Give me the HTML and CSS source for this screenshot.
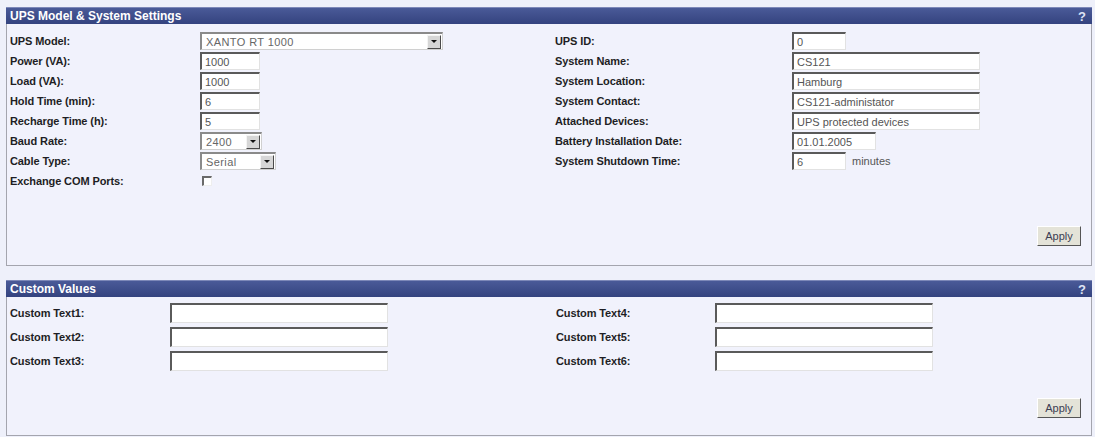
FILE: index.html
```html
<!DOCTYPE html>
<html lang="en">
<head>
    <meta charset="UTF-8">
    <title>UPS Settings</title>
    <link rel="stylesheet" href="styles.css">
</head>
<body>
    <div class="panel">
        <div class="panel-head">
            <span>UPS Model &amp; System Settings</span>
            <span class="help">?</span>
        </div>
        <div class="panel-body">
            <div class="fields system">
                <label>UPS Model:</label>
                <div class="select w-model"><span>XANTO RT 1000</span><i class="arrow"></i></div>
                <label>UPS ID:</label>
                <div><input class="w-id" type="text" value="0"></div>

                <label>Power (VA):</label>
                <div><input class="w-short" type="text" value="1000"></div>
                <label>System Name:</label>
                <div><input class="w-long" type="text" value="CS121"></div>

                <label>Load (VA):</label>
                <div><input class="w-short" type="text" value="1000"></div>
                <label>System Location:</label>
                <div><input class="w-long" type="text" value="Hamburg"></div>

                <label>Hold Time (min):</label>
                <div><input class="w-short" type="text" value="6"></div>
                <label>System Contact:</label>
                <div><input class="w-long" type="text" value="CS121-administator"></div>

                <label>Recharge Time (h):</label>
                <div><input class="w-short" type="text" value="5"></div>
                <label>Attached Devices:</label>
                <div><input class="w-long" type="text" value="UPS protected devices"></div>

                <label>Baud Rate:</label>
                <div class="select w-baud"><span>2400</span><i class="arrow"></i></div>
                <label>Battery Installation Date:</label>
                <div><input class="w-date" type="text" value="01.01.2005"></div>

                <label>Cable Type:</label>
                <div class="select w-cable"><span>Serial</span><i class="arrow"></i></div>
                <label>System Shutdown Time:</label>
                <div><input class="w-id" type="text" value="6"><span class="unit">minutes</span></div>

                <label>Exchange COM Ports:</label>
                <div><span class="check"></span></div>
                <span></span>
                <span></span>
            </div>
            <div class="actions"><button>Apply</button></div>
        </div>
    </div>

    <div class="panel">
        <div class="panel-head">
            <span>Custom Values</span>
            <span class="help">?</span>
        </div>
        <div class="panel-body custom-body">
            <div class="fields custom">
                <label>Custom Text1:</label>
                <div><input class="w-custom" type="text"></div>
                <label>Custom Text4:</label>
                <div><input class="w-custom" type="text"></div>

                <label>Custom Text2:</label>
                <div><input class="w-custom" type="text"></div>
                <label>Custom Text5:</label>
                <div><input class="w-custom" type="text"></div>

                <label>Custom Text3:</label>
                <div><input class="w-custom" type="text"></div>
                <label>Custom Text6:</label>
                <div><input class="w-custom" type="text"></div>
            </div>
            <div class="actions"><button>Apply</button></div>
        </div>
    </div>
</body>
</html>
```

FILE: styles.css
```css
body {
    margin: 7px 3px 0 6px;
    background-color: #eef0fa;
    font-family: 'Liberation Sans', Arial, sans-serif;
    font-size: 11px;
    color: #1e1e24;
}
.panel {
    margin-bottom: 14px;
}
.panel-head {
    display: flex;
    justify-content: space-between;
    align-items: center;
    height: 16px;
    padding: 0 6px 0 4px;
    background: linear-gradient(#4a5a98, #34437f);
    border-top: 1px solid #7d88b8;
    color: #ffffff;
    font-size: 12px;
    font-weight: bold;
}
.help {
    font-size: 13px;
    color: #dfe4f5;
}
.panel-body {
    background-color: #f1f2fc;
    border: 1px solid #a4a5ae;
    border-top: none;
    padding: 7px 4px 19px 3px;
}
.custom-body {
    padding-top: 6px;
    padding-bottom: 17px;
}

/* label / field pairs, two per row */
.fields {
    display: grid;
    align-items: center;
}
.system {
    grid-template-columns: 190px 355px 237px 1fr;
    grid-auto-rows: 20px;
}
.custom {
    grid-template-columns: 160px 386px 159px 1fr;
    grid-auto-rows: 20px;
    row-gap: 4px;
}
.fields label {
    font-weight: bold;
    letter-spacing: -0.1px;
}
.fields > div {
    display: flex;
    align-items: center;
}

input[type="text"] {
    box-sizing: border-box;
    height: 18px;
    padding: 1px 3px 0;
    font-family: 'Liberation Sans', Arial, sans-serif;
    font-size: 11px;
    color: #555;
    background: #ffffff;
    border-top: 2px solid #5a5a5a;
    border-left: 2px solid #5a5a5a;
    border-right: 1px solid #e2e2e2;
    border-bottom: 1px solid #e2e2e2;
    outline: none;
}
.custom input[type="text"] {
    height: 20px;
}
.w-short { width: 60px; }
.w-id { width: 54px; }
.w-long { width: 188px; }
.w-date { width: 84px; }
.w-custom { width: 218px; }
.unit {
    margin-left: 6px;
    color: #555;
}

/* drop-down boxes */
.select {
    box-sizing: border-box;
    height: 18px;
    display: flex;
    align-items: center;
    justify-content: space-between;
    padding: 0 1px 0 4px;
    background: #ffffff;
    border-top: 2px solid #8a8a8a;
    border-left: 2px solid #8a8a8a;
    border-right: 1px solid #d0d0d0;
    border-bottom: 1px solid #d0d0d0;
    color: #666;
    font-size: 11px;
    letter-spacing: 0.4px;
}
.w-model { width: 243px; }
.w-baud { width: 62px; }
.w-cable { width: 76px; }
.arrow {
    box-sizing: border-box;
    width: 14px;
    height: 14px;
    background-color: #d6d6d6;
    border: 1px solid;
    border-color: #f4f4f4 #4a4a4a #4a4a4a #f4f4f4;
    position: relative;
}
.arrow::after {
    content: '';
    position: absolute;
    left: 3px;
    top: 4px;
    border-left: 3px solid transparent;
    border-right: 3px solid transparent;
    border-top: 3px solid #111;
}

.check {
    box-sizing: border-box;
    width: 10px;
    height: 10px;
    margin-left: 2px;
    background: #ffffff;
    border-top: 2px solid #6a6a6a;
    border-left: 2px solid #6a6a6a;
    border-right: 1px solid #eeeeee;
    border-bottom: 1px solid #eeeeee;
}

.actions {
    display: flex;
    justify-content: flex-end;
    margin-top: 35px;
    padding-right: 6px;
}
.custom-body .actions {
    margin-top: 27px;
}
button {
    width: 44px;
    height: 20px;
    padding: 0;
    font-family: 'Liberation Sans', Arial, sans-serif;
    font-size: 11px;
    color: #3a3d52;
    background-color: #e4e3d8;
    border: 1px solid;
    border-color: #ffffff #555555 #555555 #ffffff;
    cursor: pointer;
}
```
